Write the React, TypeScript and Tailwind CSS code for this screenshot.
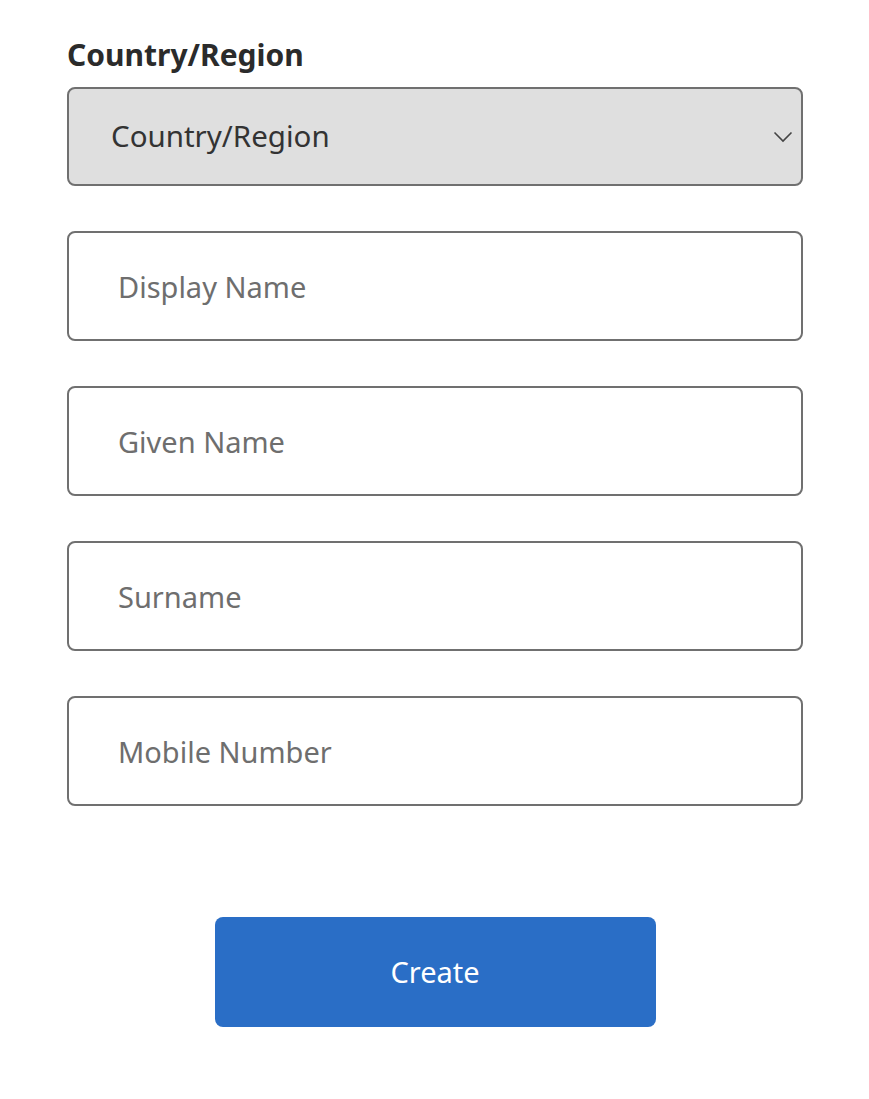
import { useState } from 'react';

const fields = ['Display Name', 'Given Name', 'Surname', 'Mobile Number'];

const App = () => {
  const [values, setValues] = useState<Record<string, string>>({});

  return (
    <div className="min-h-screen bg-white font-['Noto_Sans','Open_Sans',sans-serif]">
      <div className="w-[736px] ml-[67px] pt-[35px]">
        {/* Country label */}
        <label className="block text-[30px] leading-[40px] font-bold text-[#2b2b2b] mb-[12px]">
          Country/Region
        </label>

        {/* Country select */}
        <div className="relative h-[99px] rounded-[8px] border-2 border-[#707070] bg-[#dfdfdf] flex items-center pl-[42px] pr-[24px]">
          <span className="text-[29.5px] text-[#333333]">Country/Region</span>
          <svg
            className="absolute right-[8px] top-[42px]"
            width="20"
            height="12"
            viewBox="0 0 20 12"
            fill="none"
            stroke="#444"
            strokeWidth="1.6"
          >
            <path d="M1.5 1.5 L10 10 L18.5 1.5" />
          </svg>
        </div>

        {/* Text inputs */}
        <div className="flex flex-col gap-[45px] mt-[45px]">
          {fields.map((f) => (
            <input
              key={f}
              placeholder={f}
              value={values[f] ?? ''}
              onChange={(e) => setValues({ ...values, [f]: e.target.value })}
              className="h-[110px] w-full rounded-[8px] border-2 border-[#707070] bg-white pl-[49px] text-[29px] text-[#333] placeholder:text-[#6e6e6e] outline-none"
            />
          ))}
        </div>

        {/* Create button */}
        <div className="flex justify-center mt-[111px]">
          <button className="w-[441px] h-[110px] rounded-[8px] bg-[#2a6ec6] text-white text-[29px]">
            Create
          </button>
        </div>
      </div>
    </div>
  );
};

export default App;
